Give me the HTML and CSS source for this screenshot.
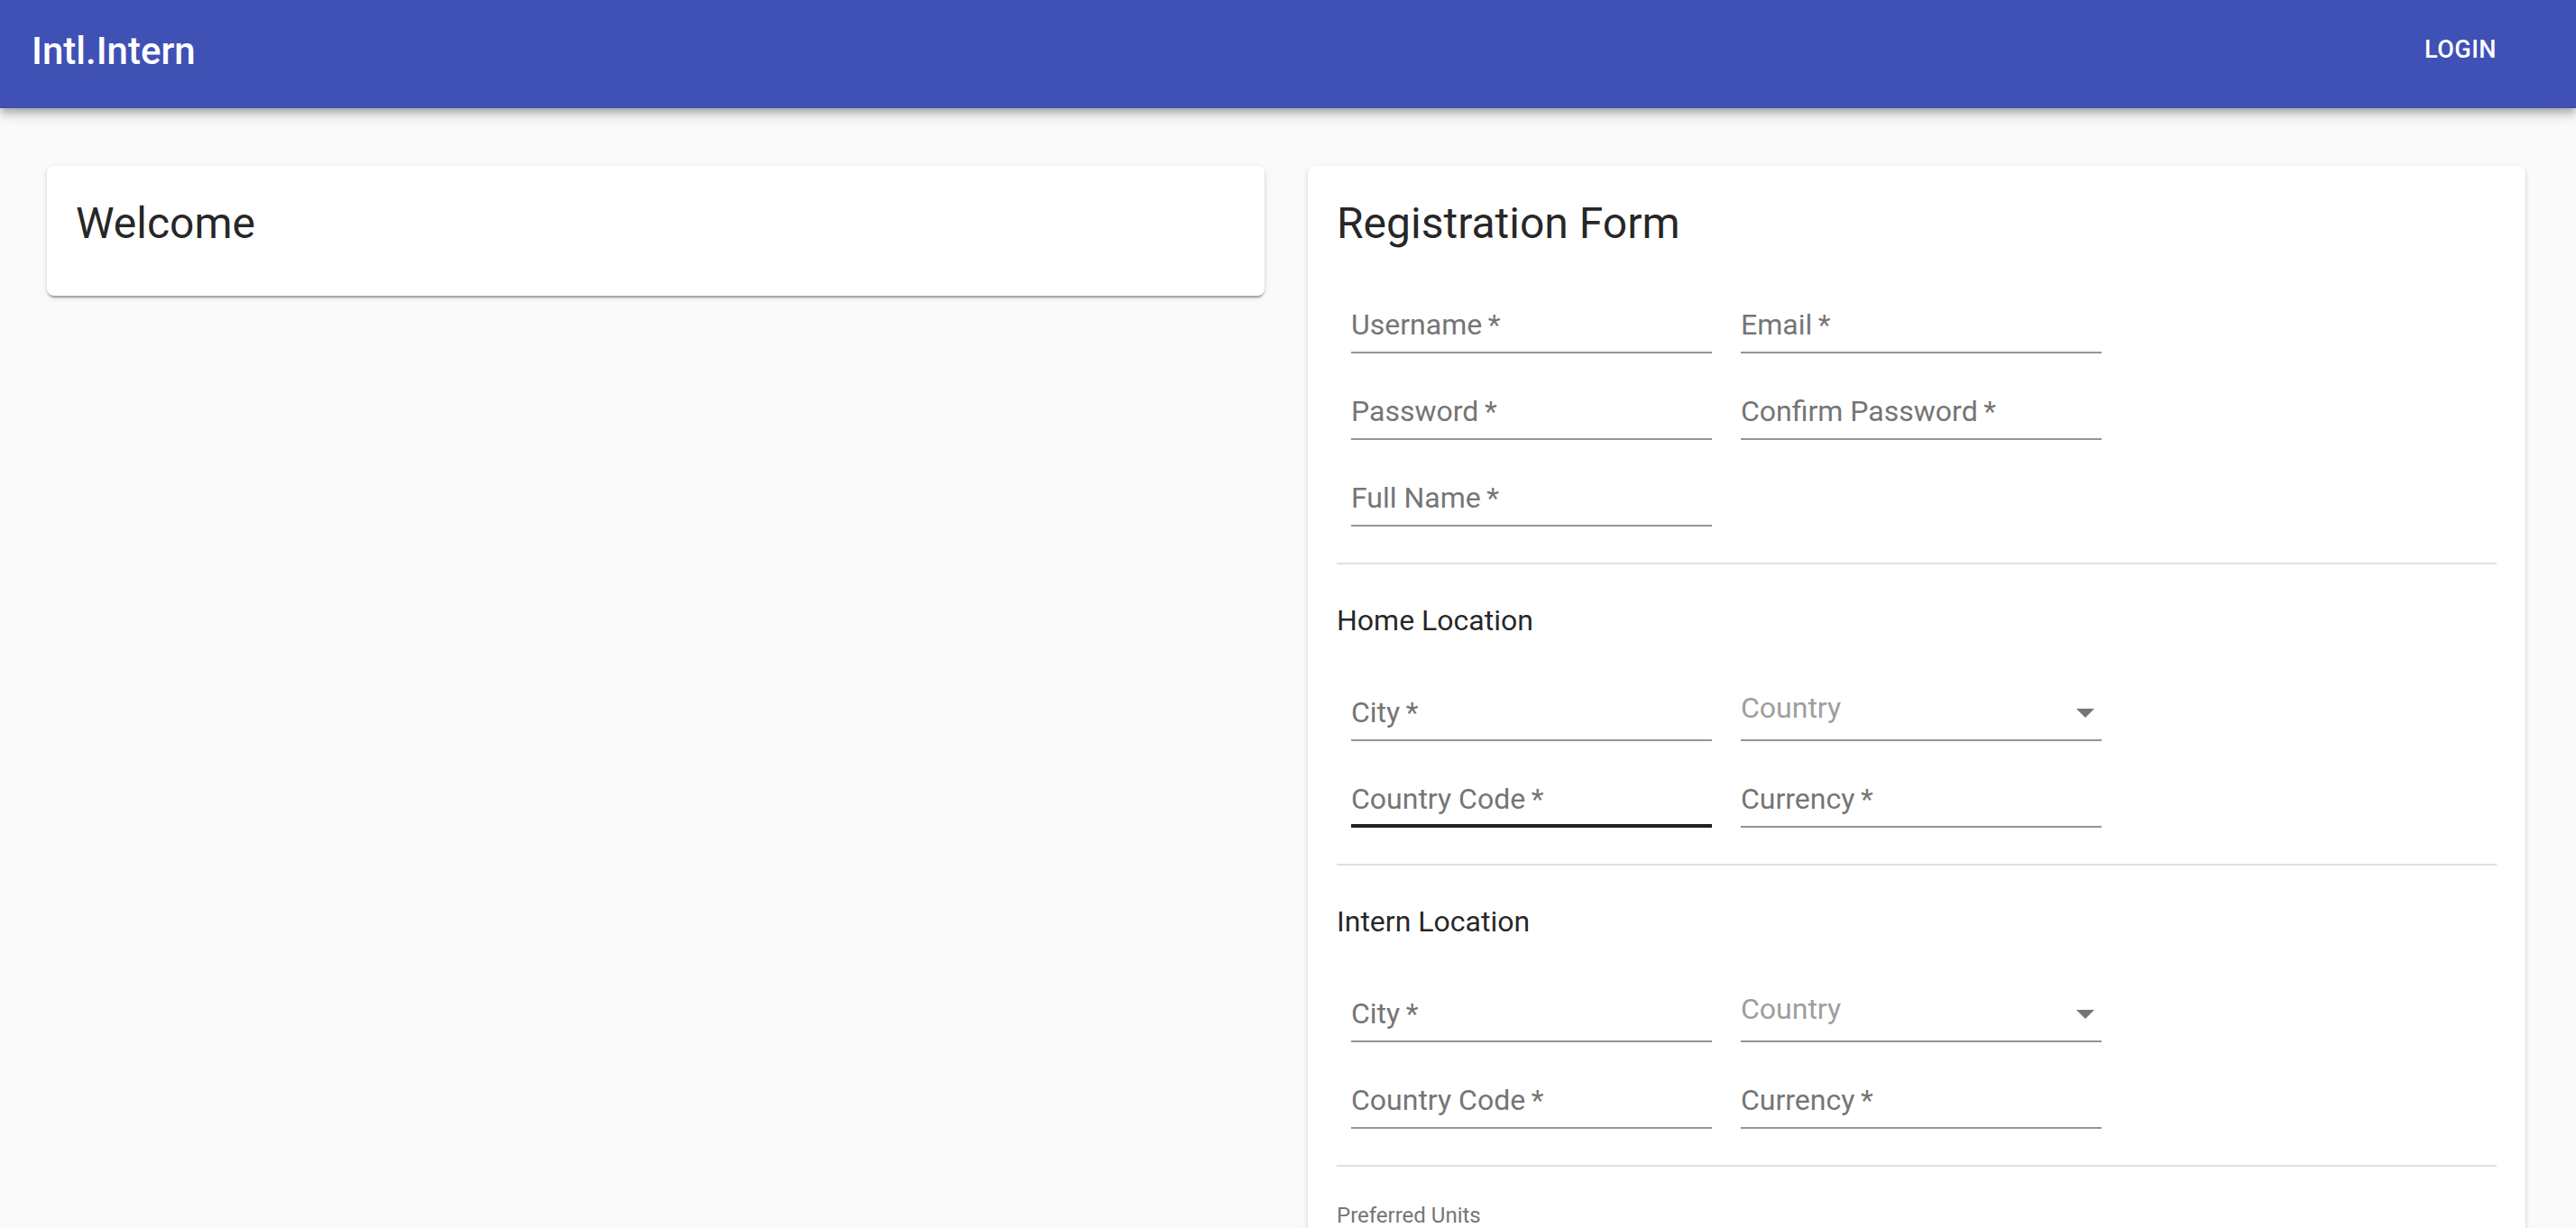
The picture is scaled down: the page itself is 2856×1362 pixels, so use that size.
FILE: index.html
```html
<!DOCTYPE html>
<html lang="en">
<head>
<meta charset="utf-8">
<title>Intl.Intern</title>
<link rel="stylesheet" href="styles.css">
</head>
<body>
<header class="appbar">
  <div class="toolbar">
    <h1 class="brand">Intl.Intern</h1>
    <button class="login" type="button">Login</button>
  </div>
</header>
<main class="page">
  <section class="card welcome">
    <h2 class="card-title">Welcome</h2>
  </section>
  <section class="card form-card">
    <h2 class="card-title form-title">Registration Form</h2>
    <div class="row">
      <div class="field"><span class="label">Username&thinsp;*</span></div>
      <div class="field"><span class="label">Email&thinsp;*</span></div>
    </div>
    <div class="row">
      <div class="field"><span class="label">Password&thinsp;*</span></div>
      <div class="field"><span class="label">Confirm Password&thinsp;*</span></div>
    </div>
    <div class="row">
      <div class="field"><span class="label">Full Name&thinsp;*</span></div>
    </div>
    <div class="divider"></div>
    <h3 class="section-title">Home Location</h3>
    <div class="row">
      <div class="field"><span class="label">City&thinsp;*</span></div>
      <div class="field select"><span class="label">Country</span>
        <svg class="arrow" width="20" height="10" viewBox="0 0 20 10"><path d="M0 0L10 10L20 0Z" fill="#757575"/></svg>
      </div>
    </div>
    <div class="row">
      <div class="field hover"><span class="label">Country Code&thinsp;*</span></div>
      <div class="field"><span class="label">Currency&thinsp;*</span></div>
    </div>
    <div class="divider"></div>
    <h3 class="section-title">Intern Location</h3>
    <div class="row">
      <div class="field"><span class="label">City&thinsp;*</span></div>
      <div class="field select"><span class="label">Country</span>
        <svg class="arrow" width="20" height="10" viewBox="0 0 20 10"><path d="M0 0L10 10L20 0Z" fill="#757575"/></svg>
      </div>
    </div>
    <div class="row">
      <div class="field"><span class="label">Country Code&thinsp;*</span></div>
      <div class="field"><span class="label">Currency&thinsp;*</span></div>
    </div>
    <div class="divider"></div>
    <p class="caption">Preferred Units</p>
  </section>
</main>
</body>
</html>
```

FILE: styles.css
```css
* { box-sizing: border-box; }

body {
  margin: 0;
  background: #fafafa;
  font-family: Roboto, "Liberation Sans", sans-serif;
}

.appbar {
  position: relative;
  z-index: 1;
  height: 120px;
  background: #3f51b5;
  color: #fff;
  box-shadow: 0 4px 8px -2px rgba(0,0,0,0.2), 0 8px 10px 0 rgba(0,0,0,0.14), 0 2px 20px 0 rgba(0,0,0,0.12);
}

.toolbar {
  height: 112px;
  display: flex;
  align-items: center;
  padding: 0 64px 0 35px;
}

.brand {
  flex: 1;
  margin: 0;
  font-size: 42px;
  font-weight: 500;
  line-height: normal;
}

.login {
  min-width: 128px;
  padding: 0 16px;
  background: none;
  border: 0;
  color: #fff;
  font-family: Roboto, "Liberation Sans", sans-serif;
  font-size: 27px;
  font-weight: 500;
  line-height: 1.75;
  letter-spacing: 0.5px;
  text-transform: uppercase;
  text-align: center;
}

.page {
  display: grid;
  grid-template-columns: 1fr 1fr;
  gap: 48px;
  align-items: start;
  padding: 64px 56px 0 52px;
}

.card {
  background: #fff;
  border-radius: 8px;
  box-shadow: 0 4px 2px -2px rgba(0,0,0,0.2), 0 2px 2px 0 rgba(0,0,0,0.14), 0 2px 6px 0 rgba(0,0,0,0.12);
}

.welcome { padding: 32px 32px 48px; }

.card-title {
  margin: 0;
  font-size: 48px;
  font-weight: 400;
  line-height: 64px;
  color: rgba(0,0,0,0.87);
}

.form-card { padding: 32px 32px 80px; }

.form-title { margin-bottom: 16px; }

.row {
  display: flex;
  gap: 32px;
  padding-left: 16px;
}

.field {
  width: 400px;
  height: 96px;
  display: flex;
  align-items: flex-end;
  padding-bottom: 14px;
  border-bottom: 2px solid #949494;
  font-size: 32px;
  line-height: 32px;
  color: #757575;
}

.field.hover {
  border-bottom: 4px solid #212121;
  padding-bottom: 12px;
}

.field.select {
  padding-bottom: 19px;
  color: #9e9e9e;
}

.arrow {
  display: block;
  margin-left: auto;
  margin-right: 8px;
  margin-bottom: 5px;
}

.divider {
  height: 2px;
  margin-top: 40px;
  background: #e0e0e0;
}

.section-title {
  margin: 34px 0 10px;
  font-size: 32px;
  font-weight: 400;
  line-height: 56px;
  color: rgba(0,0,0,0.87);
}

.caption {
  margin: 34px 0 0;
  font-size: 24px;
  line-height: 40px;
  color: #757575;
}
```
